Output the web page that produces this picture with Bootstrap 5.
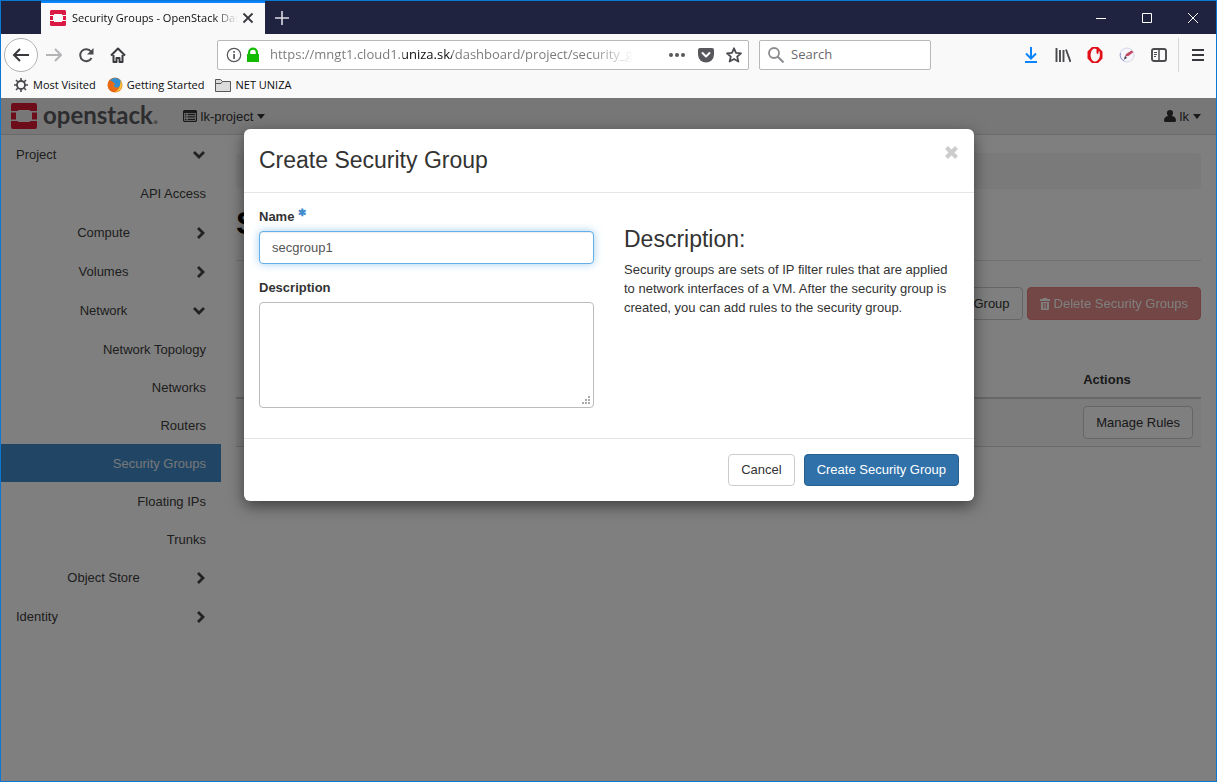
<!DOCTYPE html>
<html lang="en">
<head>
<meta charset="utf-8">
<meta name="viewport" content="width=device-width, initial-scale=1">
<title>Security Groups - OpenStack Dashboard</title>
<link rel="stylesheet" href="https://cdn.jsdelivr.net/npm/bootstrap@5.3.0/dist/css/bootstrap.min.css">
<style>
  :root { --edge: #0a78d2; --chrome-font: "Open Sans", "Noto Sans", sans-serif; }
  body { font-family: "Liberation Sans", Arial, sans-serif; font-size: 13px; line-height: 19px; color: #333; border: 1px solid var(--edge); overflow: hidden; }
  svg { display: block; flex: none; }
  button { color: inherit; }
  .plain { background: none; border: 0; padding: 0; }

  /* browser window */
  .chrome { font-family: var(--chrome-font); font-size: 11px; color: #0c0c0d; background: #f9f9fa; }
  .titlebar { background: #202340; height: 33px; padding-left: 40px; color: #fff; }
  .tab { width: 224px; background: #f9f9fa; color: #0c0c0d; border-top: 2px solid #0a84ff; padding: 0 11px 2px 9px; }
  .tab-title { white-space: nowrap; overflow: hidden; margin-left: 6px; -webkit-mask-image: linear-gradient(90deg, #000 85%, transparent); mask-image: linear-gradient(90deg, #000 85%, transparent); }
  .new-tab { margin-left: 10px; }
  .win-controls { gap: 34px; padding-right: 17px; }
  .toolbar { height: 41px; padding: 0 11px 0 3px; }
  .back { width: 34px; height: 34px; padding: 0; border: 1px solid #b1b1b3; border-radius: 50%; background: #fff; }
  .field { height: 30px; background: #fff; border: 1px solid #b8b8bb; border-radius: 2px; }
  .field input { border: 0; outline: 0; background: none; font-size: 13px; padding: 0; min-width: 0; }
  .urlbar { flex: 0 1 532px; margin-left: 91px; padding: 0 6px 0 8px; }
  .urlbar input { margin: 0 8px 0 10px; color: #777; -webkit-text-fill-color: transparent; background: linear-gradient(90deg, #777 133px, #0c0c0d 133px 182px, #777 182px 320px, rgba(119,119,119,0) 364px); -webkit-background-clip: text; background-clip: text; }
  .searchbar { width: 172px; padding-left: 8px; margin-left: 10px; }
  .searchbar input { margin-left: 7px; }
  .searchbar input::placeholder { color: #6a6a6e; opacity: 1; }
  .ext { gap: 16px; }
  .menu-sep { border-left: 1px solid #d7d7db; height: 34px; padding-left: 12px; margin-left: -5px; }
  .bookmarks { height: 23px; padding: 0 0 4px 12px; gap: 11px; }
  .bookmarks a { color: inherit; text-decoration: none; gap: 4px; }

  /* dashboard */
  .topbar { background: #eee; border-bottom: 1px solid #d4d4d4; height: 37px; padding: 0 15px 0 9px; }
  .brand { font-family: Lato, sans-serif; font-weight: 700; font-size: 24px; line-height: 32px; padding-bottom: 3px; color: #5a5a60; text-decoration: none; gap: 5px; }
  .brand svg { margin-top: 3px; }
  .dot { color: #999; }
  .side { width: 220px; flex: none; }
  .side a { color: #3c3c3c; text-decoration: none; padding: 0 15px; height: 39px; }
  .side .leaf { justify-content: end; }
  .side .sub { height: 38px; }
  .side .group { display: grid; grid-template-columns: 10px 1fr 10px; text-align: center; align-items: center; padding-left: 0; }
  .side .down { justify-self: end; margin-right: 1px; }
  .side .here { background: #428bca; color: #fff; }
  .side a.here { color: #e8eef4; }
  .main-pane { padding: 0 15px; }
  .crumbs { background: #f5f5f5; height: 36px; margin-top: 18px; border-radius: 4px; }
  .page-title { font-size: 32px; font-weight: 700; line-height: 36px; margin: 16px 0 26px; padding-bottom: 19px; border-bottom: 1px solid #e2e2e2; color: #000; }
  .btn { font-size: 13px; line-height: 19px; padding: 6px 12px; border-radius: 4px; white-space: nowrap; }
  .btn-plain { --bs-btn-color: #333; --bs-btn-bg: #fff; --bs-btn-border-color: #ccc; --bs-btn-hover-bg: #eee; }
  .btn-remove { --bs-btn-disabled-bg: #d9534f; --bs-btn-disabled-border-color: #d43f3a; }
  .grid-table { --bs-table-bg: transparent; font-size: 13px; color: #333; margin: 42px 0 0; }
  .grid-table th, .grid-table td { padding: 8px; vertical-align: middle; border-color: #d5d5d5; color: #333; }
  .grid-table thead th { border-bottom: 2px solid #d0d0d0; }
  .grid-table tbody td { background: #f9f9f9; padding: 7px 8px; }
  .grid-table .col-act { width: 125px; }

  /* dialog */
  .modal-backdrop.inside, .modal.inside { position: absolute; width: 100%; height: 100%; }
  .modal.inside { padding-left: 1px; }
  .inside .modal-dialog { max-width: 730px; margin: 31px auto; }
  .inside .modal-content { border: 0; border-radius: 6px; box-shadow: 0 5px 15px rgba(0,0,0,.5); color: #333; }
  .inside .modal-header { padding: 15px; align-items: start; border-color: #e5e5e5; }
  .inside .modal-title { font-size: 23px; line-height: 33px; font-weight: 400; }
  .inside .modal-body { padding: 15px; }
  .inside .modal-body .row { --bs-gutter-x: 30px; }
  .inside .modal-footer { padding: 15px; gap: 9px; border-color: #e5e5e5; }
  .inside .modal-footer .btn { margin: 0; padding: 5px 12px; line-height: 20px; }
  .inside label { display: block; font-weight: 700; line-height: 18px; margin-bottom: 5px; }
  .inside .form-control { font-size: 13px; line-height: 19px; padding: 6px 12px; margin-bottom: 15px; border-color: #bbb; border-radius: 4px; color: #555; }
  .inside .form-control.active { border-color: #66afe9; box-shadow: inset 0 1px 1px rgba(0,0,0,.08), 0 0 8px rgba(102,175,233,.6); }
  .inside textarea.form-control { height: 106px; display: block; }
  .required { color: #428bca; }
  textarea::-webkit-resizer { background: url("data:image/svg+xml,%3Csvg xmlns='http://www.w3.org/2000/svg' width='15' height='15' fill='%23aaa'%3E%3Cpath d='M10 4h2v2h-2zM10 7h2v2h-2zM10 10h2v2h-2zM7 7h2v2H7zM7 10h2v2H7zM4 10h2v2H4z'/%3E%3C/svg%3E") no-repeat; }
  .help-title { font-size: 23px; line-height: 25px; font-weight: 400; margin: 19px 0 8px; }
  .btn-create { --bs-btn-bg: #3071a9; --bs-btn-border-color: #285e8e; --bs-btn-color: #fff; }
</style>
</head>
<body class="vh-100 d-flex flex-column">

<header class="chrome">
  <div class="titlebar d-flex align-items-stretch">
    <div class="tab d-flex align-items-center">
      <svg width="16" height="16" viewBox="0 0 16 16"><path fill="#da1a45" d="M1 0h14l1 1v4h-4V4H4v1H0V1zM0 6h3v4H0zM13 6h3v4h-3zM0 11h4v1h8v-1h4v4l-1 1H1l-1-1z"/></svg>
      <span class="tab-title flex-grow-1">Security Groups - OpenStack Dashboard</span>
      <button class="plain ms-1" aria-label="Close tab"><svg width="12" height="12" viewBox="0 0 12 12"><path d="M1.500 1.500l9 9m0-9l-9 9" stroke="#38383d" stroke-width="1.800"/></svg></button>
    </div>
    <button class="plain new-tab" aria-label="New tab"><svg width="14" height="14" viewBox="0 0 14 14"><path d="M7 0v14M0 7h14" stroke="#dcdce4" stroke-width="1.600"/></svg></button>
    <div class="win-controls d-flex align-items-center ms-auto">
      <button class="plain" aria-label="Minimize"><svg width="12" height="12"><path d="M1 6.500h10" stroke="#fff"/></svg></button>
      <button class="plain" aria-label="Maximize"><svg width="12" height="12"><path d="M1.500 1.500h9v9h-9z" stroke="#fff" fill="none"/></svg></button>
      <button class="plain" aria-label="Close"><svg width="12" height="12"><path d="M1 1l10 10M11 1L1 11" stroke="#fff"/></svg></button>
    </div>
  </div>

  <div class="toolbar d-flex align-items-center">
    <button class="back d-flex align-items-center justify-content-center" aria-label="Back"><svg width="18" height="16" viewBox="0 0 18 16"><path d="M8 2L2 8l6 6M2 8h15" fill="none" stroke="#38383d" stroke-width="2"/></svg></button>
    <button class="plain ms-2" aria-label="Forward"><svg width="16" height="16" viewBox="1 0 16 16"><path d="M10 2l6 6-6 6M16 8H1" fill="none" stroke="#b4b4b7" stroke-width="2"/></svg></button>
    <button class="plain ms-3" aria-label="Reload"><svg width="16" height="16" viewBox="0 0 16 16"><path d="M13 4.500A6 6 0 1 0 13.500 11" fill="none" stroke="#4a4a4f" stroke-width="2"/><path d="M15.500 1v6.500H9z" fill="#4a4a4f"/></svg></button>
    <button class="plain ms-3" aria-label="Home"><svg width="16" height="16" viewBox="0 0 16 16"><path d="M1 8.500L8 1.500l7 7M3.500 8v7h3v-4h3v4h3V8" fill="none" stroke="#38383d" stroke-width="2" stroke-linejoin="round"/></svg></button>
    <div class="field urlbar d-flex align-items-center">
      <svg width="16" height="16" viewBox="0 0 16 16"><circle cx="8" cy="8" r="6.700" fill="none" stroke="#58585c" stroke-width="1.200"/><path d="M7.200 4h1.700v1.700H7.200zM7.200 7h1.700v5H7.200z" fill="#58585c"/></svg>
      <svg class="ms-1" width="14" height="16" viewBox="0 0 14 16"><path fill="#12bc00" d="M1 7h1V5.500a4.700 4.700 0 0 1 10 0V7h1v8H1zM4.200 7h5.600V5.500a2.600 2.600 0 0 0-5.600 0z"/></svg>
      <input class="flex-grow-1" aria-label="Address" value="https://mngt1.cloud1.uniza.sk/dashboard/project/security_groups">
      <button class="plain me-2" aria-label="Page actions"><svg width="18" height="16"><g fill="#58585c"><circle cx="3" cy="8" r="2"/><circle cx="9" cy="8" r="2"/><circle cx="15" cy="8" r="2"/></g></svg></button>
      <button class="plain ms-1" aria-label="Save to Pocket"><svg width="16" height="16" viewBox="0 0 16 16"><path fill="#58585c" d="M2 1h12q2 0 2 2v4.500a8 8 0 0 1-16 0V3q0-2 2-2z"/><path d="M4.500 6L8 9.500 11.500 6" fill="none" stroke="#fff" stroke-width="2" stroke-linecap="round" stroke-linejoin="round"/></svg></button>
      <button class="plain ms-2 ps-1" aria-label="Bookmark"><svg width="16" height="16" viewBox="0 0 16 16"><path d="M8 1.300l2 4.500 5 .5-3.800 3.300 1.200 5L8 12l-4.400 2.600 1.200-5L1 6.300l5-.5z" fill="none" stroke="#4a4a4f" stroke-width="1.800" stroke-linejoin="round"/></svg></button>
    </div>
    <div class="field searchbar d-flex align-items-center">
      <svg width="16" height="16" viewBox="0 0 16 16"><circle cx="6" cy="6" r="5" fill="none" stroke="#8c8c90" stroke-width="1.800"/><path d="M9.500 9.500l6 6" stroke="#8c8c90" stroke-width="2"/></svg>
      <input type="search" aria-label="Search" placeholder="Search">
    </div>
    <div class="ext d-flex align-items-center ms-auto">
      <button class="plain" aria-label="Downloads"><svg width="16" height="16" viewBox="0 0 16 16"><path d="M8 0v11M3 6.500l5 5 5-5M2 15h12" fill="none" stroke="#0a84ff" stroke-width="2"/></svg></button>
      <button class="plain" aria-label="Library"><svg width="16" height="16" viewBox="0 0 16 16"><path d="M1.500 1v14M5 3v12M8.500 3v12M11 2.500L15.500 15" stroke="#4a4a4f" stroke-width="1.900"/></svg></button>
      <button class="plain" aria-label="Opera extension"><svg width="16" height="16" viewBox="0 0 16 16"><path fill="#e01018" fill-rule="evenodd" d="M5 0h6l4.500 4.500v7L11 16H5L.5 11.500v-7zM7 1.500C2.500 3.500 2.500 12.500 7 14.500h2c4.500-2 4.500-8 3-11L11 7.500 9.500 6V2z"/></svg></button>
      <button class="plain" aria-label="Edit extension"><svg width="16" height="16" viewBox="0 0 16 16"><circle cx="8" cy="8" r="7" fill="#f6f6fb" stroke="#d4d6ea"/><path d="M1.500 6a7 7 0 0 0 4 8" fill="none" stroke="#8f9ad0"/><path d="M6 9.500l1-2.500 5.500-3.500 2 1.500-5 4z" fill="#c04a62"/><path d="M5 12.500l3-1.500-2-2z" fill="#334"/></svg></button>
      <button class="plain" aria-label="Sidebar"><svg width="16" height="16" viewBox="0 0 16 16"><rect x="1" y="2" width="14" height="12" rx="2" fill="none" stroke="#4a4a4f" stroke-width="1.900"/><path d="M8 2v12" stroke="#4a4a4f" stroke-width="1.500"/><path d="M3 5.500h3M3 7.500h3M3 9.500h2" stroke="#4a4a4f"/></svg></button>
      <div class="menu-sep d-flex align-items-center"><button class="plain" aria-label="Open menu"><svg width="14" height="14"><path d="M1 2h12M1 7h12M1 12h12" stroke="#38383d" stroke-width="2"/></svg></button></div>
    </div>
  </div>

  <nav class="bookmarks d-flex align-items-center" aria-label="Bookmarks">
    <a href="#" class="d-flex align-items-center"><svg width="16" height="16" viewBox="0 0 16 16"><circle cx="8" cy="8" r="4" fill="none" stroke="#4a4a4f" stroke-width="1.800"/><path d="M8 1v3M8 12v3M1 8h3M12 8h3M3 3l2 2M11 11l2 2M13 3l-2 2M5 11l-2 2" stroke="#4a4a4f" stroke-width="1.600"/></svg>Most Visited</a>
    <a href="#" class="d-flex align-items-center"><svg width="16" height="16" viewBox="0 0 16 16"><circle cx="8" cy="8" r="7.500" fill="#e8761b"/><path d="M2.500 4A7 7 0 0 1 13.500 3.500q2 5-1.500 7-4 1-5.500-2l2-1.500-3-2z" fill="#2f8fd0"/><path d="M2.500 2.500Q3.500 4 5 4L7 6.500 5.500 8Q5.500 11 9 11q4 0 5-6 2 5-1 8.500-5 3-10 0-4-4-.5-11z" fill="#e66a16"/><path d="M13.500 3.500q3 5-.5 9.500-2 2-5 2 6-3 5.500-11.500z" fill="#ffc83c"/></svg>Getting Started</a>
    <a href="#" class="d-flex align-items-center"><svg width="16" height="16" viewBox="0 0 16 16"><path d="M.5 14.500v-12h5l2 2h8v10z" fill="#dcdcdc" stroke="#58585c"/><path d="M1 6.500h5l1.500-2" fill="none" stroke="#58585c"/></svg>NET UNIZA</a>
  </nav>
</header>

<div class="position-relative flex-grow-1 overflow-hidden">
  <nav class="topbar d-flex align-items-center">
    <a class="brand d-flex align-items-center" href="#"><svg width="28" height="28" viewBox="0 0 28 28"><path fill="#da1a32" d="M3 1h22q2 0 2 2v6h-7V8H8v1H1V3q0-2 2-2zM1 10.500h5v7H1zM22 10.500h5v7h-5zM1 19h7v1h12v-1h7v6q0 2-2 2H3q-2 0-2-2z"/></svg><span>openstack<span class="dot">.</span></span></a>
    <button class="plain d-flex align-items-center gap-1 ms-4"><svg width="14" height="12" viewBox="0 0 14 12"><path fill="#333" fill-rule="evenodd" d="M1 0h12l1 1v10l-1 1H1l-1-1V1zM1.200 3v7.800h11.600V3z"/><path d="M2 4.500h1.500M4.500 4.500H12M2 6.900h1.500M4.500 6.900H12M2 9.300h1.500M4.500 9.300H12" stroke="#333" stroke-width="1.300"/></svg>lk-project<svg width="8" height="5"><path d="M0 0h8L4 5z" fill="#333"/></svg></button>
    <button class="plain d-flex align-items-center gap-1 ms-auto"><svg width="12" height="12" viewBox="0 0 12 12"><path fill="#333" d="M6 0a3 3 0 0 1 3 3.200Q8.800 5 8 6q4 .5 4 4.500 0 1.500-1.500 1.500h-9Q0 12 0 10.500 0 6.500 4 6 3 5 3 3.200A3 3 0 0 1 6 0z"/></svg>lk<svg width="8" height="5"><path d="M0 0h8L4 5z" fill="#333"/></svg></button>
  </nav>

  <svg class="d-none"><symbol id="right" viewBox="0 0 10 12"><path d="M2 1l5 5-5 5" fill="none" stroke="#444" stroke-width="2.800"/></symbol><symbol id="down" viewBox="0 0 12 10"><path d="M1 2l5 5 5-5" fill="none" stroke="#444" stroke-width="2.800"/></symbol></svg>
  <div class="d-flex">
    <nav class="side" aria-label="Dashboard">
      <a href="#" class="d-flex align-items-center justify-content-between">Project<svg class="down" width="12" height="10"><use href="#down"/></svg></a>
      <a href="#" class="d-flex align-items-center leaf">API Access</a>
      <a href="#" class="group"><span></span>Compute<svg width="10" height="12"><use href="#right"/></svg></a>
      <a href="#" class="group"><span></span>Volumes<svg width="10" height="12"><use href="#right"/></svg></a>
      <a href="#" class="group"><span></span>Network<svg class="down" width="12" height="10"><use href="#down"/></svg></a>
      <a href="#" class="d-flex align-items-center leaf sub">Network Topology</a>
      <a href="#" class="d-flex align-items-center leaf sub">Networks</a>
      <a href="#" class="d-flex align-items-center leaf sub">Routers</a>
      <a href="#" class="d-flex align-items-center leaf sub here">Security Groups</a>
      <a href="#" class="d-flex align-items-center leaf sub">Floating IPs</a>
      <a href="#" class="d-flex align-items-center leaf sub">Trunks</a>
      <a href="#" class="group"><span></span>Object Store<svg width="10" height="12"><use href="#right"/></svg></a>
      <a href="#" class="d-flex align-items-center justify-content-between">Identity<svg width="10" height="12"><use href="#right"/></svg></a>
    </nav>

    <main class="main-pane flex-grow-1">
      <div class="crumbs"></div>
      <h1 class="page-title">Security Groups</h1>
      <div class="d-flex justify-content-end gap-1">
        <button class="btn btn-plain">Create Security Group</button>
        <button class="btn btn-danger btn-remove d-flex align-items-center gap-1" disabled><svg width="10" height="12" viewBox="0 0 10 12"><path fill="#fff" fill-rule="evenodd" d="M3 0h4v1h3v2H0V1h3zM1 4h8v7q0 1-1 1H2q-1 0-1-1zM3 5v5.500h.8V5zM4.600 5v5.500h.8V5zM6.200 5v5.500H7V5z"/></svg>Delete Security Groups</button>
      </div>
      <table class="table grid-table">
        <thead><tr><th></th><th class="col-act">Actions</th></tr></thead>
        <tbody><tr><td></td><td><button class="btn btn-plain">Manage Rules</button></td></tr></tbody>
      </table>
    </main>
  </div>

  <div class="modal-backdrop inside show"></div>
  <div class="modal inside d-block" role="dialog" aria-labelledby="dlg-title">
    <div class="modal-dialog">
      <form class="modal-content">
        <div class="modal-header">
          <h2 class="modal-title" id="dlg-title">Create Security Group</h2>
          <button type="button" class="plain ms-auto" aria-label="Close"><svg width="15" height="16" viewBox="0 0 15 16"><path d="M2.500 3.500l10 10M12.500 3.500l-10 10" stroke="#ccc" stroke-width="4.200"/></svg></button>
        </div>
        <div class="modal-body">
          <div class="row">
            <div class="col-6">
              <label for="name">Name <sup class="required">✱</sup></label>
              <input id="name" class="form-control active" value="secgroup1">
              <label for="desc">Description</label>
              <textarea id="desc" class="form-control"></textarea>
            </div>
            <div class="col-6">
              <h3 class="help-title">Description:</h3>
              <p class="m-0">Security groups are sets of IP filter rules that are applied to network interfaces of a VM. After the security group is created, you can add rules to the security group.</p>
            </div>
          </div>
        </div>
        <div class="modal-footer">
          <button type="button" class="btn btn-plain">Cancel</button>
          <button type="submit" class="btn btn-create">Create Security Group</button>
        </div>
      </form>
    </div>
  </div>
</div>

<script src="https://cdn.jsdelivr.net/npm/bootstrap@5.3.0/dist/js/bootstrap.bundle.min.js"></script>
</body>
</html>
